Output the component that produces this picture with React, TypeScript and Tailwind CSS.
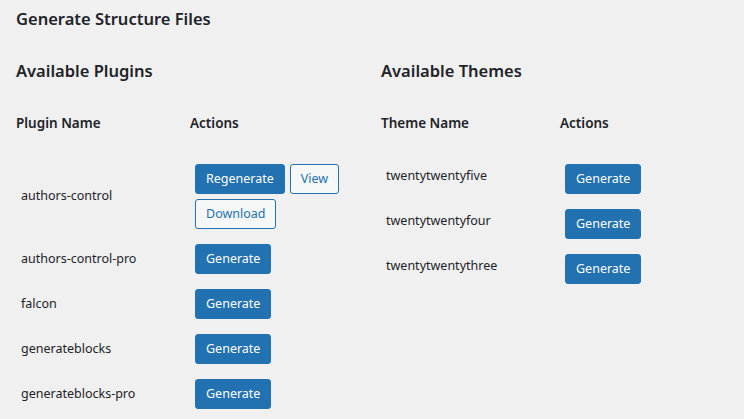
const F = { fontFamily: '"Noto Sans", "Open Sans", sans-serif' };

function Btn({ children, primary = true }: { children: string; primary?: boolean }) {
  return (
    <span
      className={
        "inline-flex h-[30px] items-center rounded-[3px] border px-[10px] text-[12.5px] " +
        (primary
          ? "border-[#2271b1] bg-[#2271b1] text-white"
          : "border-[#2271b1] bg-[#f6f7f7] text-[#2271b1]")
      }
    >
      {children}
    </span>
  );
}

export default function App() {
  const plugins = ["authors-control-pro", "falcon", "generateblocks", "generateblocks-pro"];
  const themes = ["twentytwentyfive", "twentytwentyfour", "twentytwentythree"];
  return (
    <div style={F} className="min-h-[419px] w-[744px] bg-[#f0f0f1] px-4 pt-[7px] text-[#1d2327]">
      <h1 className="text-[16.5px] font-semibold leading-[23px]">Generate Structure Files</h1>
      <div className="mt-[29px] flex">
        <div className="w-[365px]">
          <h2 className="text-[16.5px] font-semibold leading-[23px]">Available Plugins</h2>
          <div className="mt-[31px] flex text-[13.5px] font-semibold leading-[20px]">
            <div className="w-[174px]">Plugin Name</div>
            <div>Actions</div>
          </div>
          <div className="mt-[31px] flex items-center">
            <div className="w-[174px] pl-[5px] text-[12.5px]">authors-control</div>
            <div className="w-[150px] pl-[5px]">
              <div className="flex gap-[5px]">
                <Btn>Regenerate</Btn>
                <Btn primary={false}>View</Btn>
              </div>
              <div className="mt-[5px]">
                <Btn primary={false}>Download</Btn>
              </div>
            </div>
          </div>
          {plugins.map((p) => (
            <div key={p} className="mt-[15px] flex items-center">
              <div className="w-[174px] pl-[5px] text-[12.5px]">{p}</div>
              <div className="pl-[5px]">
                <Btn>Generate</Btn>
              </div>
            </div>
          ))}
        </div>
        <div>
          <h2 className="text-[16.5px] font-semibold leading-[23px]">Available Themes</h2>
          <div className="mt-[31px] flex text-[13.5px] font-semibold leading-[20px]">
            <div className="w-[179px]">Theme Name</div>
            <div>Actions</div>
          </div>
          {themes.map((t, i) => (
            <div key={t} className={"flex items-start " + (i === 0 ? "mt-[31px]" : "mt-[15px]")}>
              <div className="w-[179px] pl-[5px] pt-[3px] text-[12.5px] leading-[18px]">{t}</div>
              <div className="pl-[5px]">
                <Btn>Generate</Btn>
              </div>
            </div>
          ))}
        </div>
      </div>
    </div>
  );
}
